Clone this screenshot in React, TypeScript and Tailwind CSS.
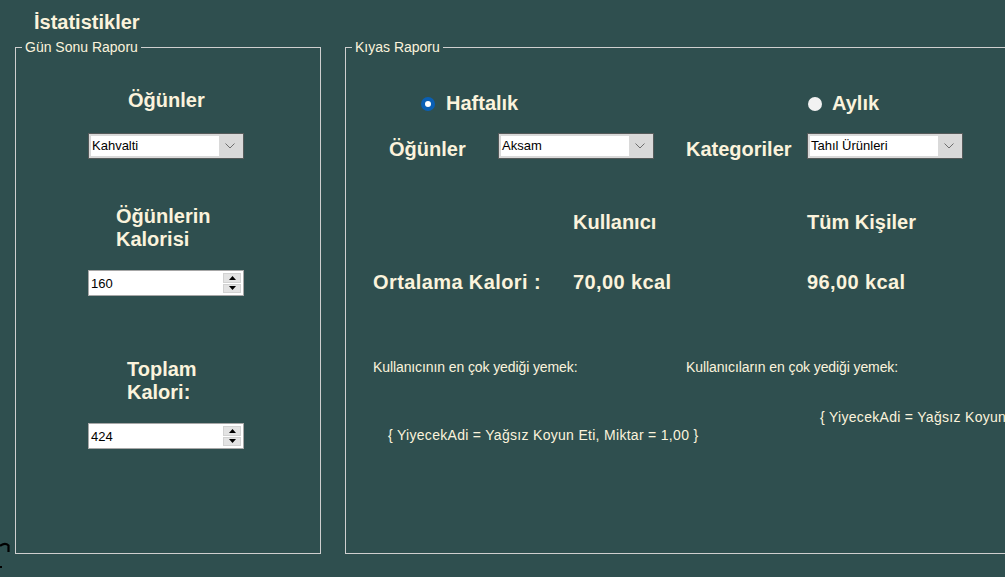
import React from "react";

function Combo({ value }: { value: string }) {
  return (
    <div className="w-[156px] h-[26px] shrink-0 border border-[#555a5a] bg-[#d9d9d9] flex p-[2px] font-normal">
      <div className="w-[128px] h-[20px] bg-white text-black text-[13px] leading-[20px] pl-[1px] whitespace-nowrap overflow-hidden">
        {value}
      </div>
      <div className="flex-1 flex items-center justify-center">
        <svg width="10" height="6" viewBox="0 0 10 6">
          <polyline points="0.5,0.5 5,5 9.5,0.5" fill="none" stroke="#6e6e6e" strokeWidth="1" />
        </svg>
      </div>
    </div>
  );
}

function Numeric({ value }: { value: string }) {
  return (
    <div className="w-[156px] h-[26px] shrink-0 border border-[#a7a7a7] bg-white flex items-center font-normal">
      <div className="flex-1 text-black text-[13px] leading-[15px] pl-[2px]">{value}</div>
      <div className="w-[18px] h-[20px] mr-[2px] flex flex-col gap-[1px]">
        <div className="flex-1 bg-[#e3e3e3] border border-[#d2d2d2] flex items-center justify-center">
          <svg width="7" height="4" viewBox="0 0 7 4">
            <polygon points="3.5,0 7,4 0,4" fill="#000" />
          </svg>
        </div>
        <div className="flex-1 bg-[#e3e3e3] border border-[#d2d2d2] flex items-center justify-center">
          <svg width="7" height="4" viewBox="0 0 7 4">
            <polygon points="0,0 7,0 3.5,4" fill="#000" />
          </svg>
        </div>
      </div>
    </div>
  );
}

function Radio({ checked }: { checked: boolean }) {
  return checked ? (
    <div className="w-[14px] h-[14px] rounded-full bg-[#0a5fb4] flex items-center justify-center shrink-0">
      <div className="w-[6px] h-[6px] rounded-full bg-white" />
    </div>
  ) : (
    <div className="w-[14px] h-[14px] rounded-full bg-[#f2f2f2] shrink-0" />
  );
}

export default function App() {
  return (
    <div className="w-[1005px] h-[577px] bg-[#2f4f4f] overflow-hidden text-[#fbf3dc] font-['Liberation_Sans',Arial,sans-serif]">
      <div className="h-[40px] pl-[34px] pt-[11px] text-[20px] leading-[23px] font-bold">İstatistikler</div>
      <div className="flex items-start">
        <div className="w-[15px] shrink-0 mt-[501px]">
          <svg width="12" height="30" viewBox="0 0 12 30">
            <path d="M0 5 Q5 1 8.5 4.5 L8.5 11" fill="none" stroke="#000" strokeWidth="2.2" />
            <rect x="0" y="25" width="2" height="2" fill="#000" />
          </svg>
        </div>
        <fieldset className="w-[306px] h-[514px] shrink-0 border border-[#cfcfcf]">
          <legend className="ml-[6px] px-[3px] text-[14px] leading-[15px]">Gün Sonu Raporu</legend>
          <div className="flex flex-col items-start">
            <div className="ml-[112px] mt-[34px] text-[20px] leading-[23px] font-bold">Öğünler</div>
            <div className="ml-[72px] mt-[21px]">
              <Combo value="Kahvalti" />
            </div>
            <div className="ml-[100px] mt-[46px] text-[20px] leading-[23px] font-bold">
              Öğünlerin
              <br />
              Kalorisi
            </div>
            <div className="ml-[72px] mt-[19px]">
              <Numeric value="160" />
            </div>
            <div className="ml-[111px] mt-[62px] text-[20px] leading-[23px] font-bold">
              Toplam
              <br />
              Kalori:
            </div>
            <div className="ml-[72px] mt-[19px]">
              <Numeric value="424" />
            </div>
          </div>
        </fieldset>
        <fieldset className="ml-[24px] w-[700px] h-[514px] shrink-0 border border-[#cfcfcf]">
          <legend className="ml-[6px] px-[3px] text-[14px] leading-[15px]">Kıyas Raporu</legend>
          <div className="flex flex-col">
            <div className="flex items-center mt-[37px] ml-[75px] h-[23px] text-[20px] leading-[23px] font-bold">
              <div className="w-[387px] flex items-center gap-[11px]">
                <Radio checked={true} />
                <span>Haftalık</span>
              </div>
              <div className="flex items-center gap-[10px]">
                <Radio checked={false} />
                <span>Aylık</span>
              </div>
            </div>
            <div className="flex items-start mt-[18px] ml-[43px] text-[20px] leading-[23px] font-bold">
              <div className="w-[109px] mt-[5px]">Öğünler</div>
              <Combo value="Aksam" />
              <div className="ml-[32px] w-[121px] mt-[5px]">Kategoriler</div>
              <Combo value="Tahıl Ürünleri" />
            </div>
            <div className="flex mt-[50px] ml-[227px] text-[20px] leading-[23px] font-bold">
              <div className="w-[234px]">Kullanıcı</div>
              <div>Tüm Kişiler</div>
            </div>
            <div className="flex mt-[37px] ml-[27px] text-[20px] leading-[23px] font-bold tracking-[0.4px]">
              <div className="w-[200px]">Ortalama Kalori :</div>
              <div className="w-[234px]">70,00 kcal</div>
              <div>96,00 kcal</div>
            </div>
            <div className="flex mt-[66px] ml-[27px] text-[14px] leading-[15px] tracking-[-0.1px]">
              <div className="w-[313px]">Kullanıcının en çok yediği yemek:</div>
              <div>Kullanıcıların en çok yediği yemek:</div>
            </div>
            <div className="flex items-start mt-[35px] ml-[42px] text-[14px] leading-[15px] tracking-[0.3px] whitespace-nowrap">
              <div className="w-[432px] mt-[18px] shrink-0">{"{ YiyecekAdi = Yağsız Koyun Eti, Miktar = 1,00 }"}</div>
              <div>{"{ YiyecekAdi = Yağsız Koyun Eti, Miktar = 1,00 }"}</div>
            </div>
          </div>
        </fieldset>
      </div>
    </div>
  );
}
